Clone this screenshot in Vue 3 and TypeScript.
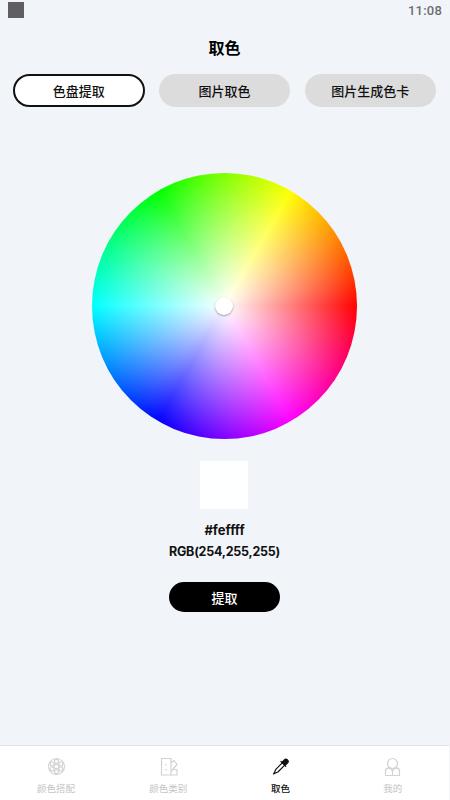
<script setup lang="ts">
const tabs: { label: string; active: boolean }[] = [
  { label: '色盘提取', active: true },
  { label: '图片取色', active: false },
  { label: '图片生成色卡', active: false },
]
</script>

<template>
  <div class="page">
    <div class="status">
      <span class="notice"></span>
      <span class="time">11:08</span>
    </div>
    <h1 class="title">取色</h1>
    <div class="tabs">
      <div v-for="t in tabs" :key="t.label" class="tab" :class="{ active: t.active }">{{ t.label }}</div>
    </div>
    <main class="main">
      <div class="wheel">
        <div class="knob"></div>
      </div>
      <div class="swatch"></div>
      <div class="hex">#feffff</div>
      <div class="rgb">RGB(254,255,255)</div>
      <div class="pick">提取</div>
    </main>
    <nav class="nav">
      <div class="item">
        <svg viewBox="0 0 19 19" class="ico" fill="none" stroke="#d2d2d2" stroke-width="1.1">
          <circle cx="9.5" cy="9.5" r="8" />
          <circle cx="9.5" cy="9.5" r="2.4" />
          <circle cx="9.5" cy="4.4" r="2" />
          <circle cx="9.5" cy="14.6" r="2" />
          <circle cx="5.1" cy="6.95" r="2" />
          <circle cx="13.9" cy="6.95" r="2" />
          <circle cx="5.1" cy="12.05" r="2" />
          <circle cx="13.9" cy="12.05" r="2" />
        </svg>
        <span>颜色搭配</span>
      </div>
      <div class="item">
        <svg viewBox="0 0 19 19" class="ico" fill="none" stroke="#d2d2d2" stroke-width="1.2" stroke-linejoin="round">
          <path d="M2.5 1.5h9.5v16.5H2.5z" />
          <path d="M12 6l3-2.5 3 4-6 7" />
          <path d="M12 18h6v-5.5h-4" />
          <path d="M7 7v1.5M7 12v1.5" />
        </svg>
        <span>颜色类别</span>
      </div>
      <div class="item on">
        <svg viewBox="0 0 19 19" class="ico" fill="none" stroke="#111" stroke-width="1.2" stroke-linejoin="round" stroke-linecap="round">
          <path d="M11 5.5l2.3-2.6a2.2 2.2 0 0 1 3.2 3.1L14 8.4z" fill="#111" />
          <path d="M10 4.5l4.8 4.8" />
          <path d="M11.2 5.8L4.6 12.6 3.6 15.2 2.5 17l1.9-1 2.5-1 6.6-6.7" />
        </svg>
        <span>取色</span>
      </div>
      <div class="item">
        <svg viewBox="0 0 19 19" class="ico" fill="none" stroke="#d2d2d2" stroke-width="1.2" stroke-linejoin="round">
          <circle cx="9.5" cy="6.5" r="5" />
          <path d="M2.5 13.5q0-1.6 3-2.6 3 .6 4 3.1 1-2.5 4-3.1 3 1 3 2.6v5h-14z" />
          <path d="M9.5 14v4.5" />
        </svg>
        <span>我的</span>
      </div>
    </nav>
  </div>
</template>

<style>
html, body { margin: 0; padding: 0; background: #f1f5fa; }
</style>

<style scoped>
.page {
  width: 449px;
  height: 800px;
  overflow: hidden;
  background: #f1f5fa;
  display: flex;
  flex-direction: column;
  font-family: "Noto Sans CJK SC", "Noto Sans", sans-serif;
  color: #000;
}
.status {
  height: 24px;
  display: flex;
  align-items: center;
  justify-content: space-between;
  padding: 0 7px 0 8px;
  flex: none;
}
.notice {
  width: 16px;
  height: 16px;
  margin-top: -5px;
  background: #5f5f63;
}
.time {
  font: 500 13px Roboto, sans-serif;
  color: #6b6d70;
  letter-spacing: 0.2px;
  margin-top: -4px;
}
.title {
  margin: 13px 0 0;
  height: 20px;
  line-height: 20px;
  text-align: center;
  font-size: 16px;
  font-weight: 700;
}
.tabs {
  margin-top: 17px;
  padding: 0 13px;
  display: flex;
  justify-content: space-between;
}
.tab {
  box-sizing: border-box;
  width: 131.5px;
  height: 33px;
  border-radius: 17px;
  background: #dcdcdc;
  display: flex;
  align-items: center;
  justify-content: center;
  font-size: 13px;
  font-weight: 500;
  color: #111;
}
.tab.active {
  background: #fff;
  border: 2px solid #111;
}
.main {
  flex: 1;
  display: flex;
  flex-direction: column;
  align-items: center;
}
.wheel {
  margin-top: 66px;
  width: 265px;
  height: 266px;
  border-radius: 50%;
  position: relative;
  background:
    radial-gradient(closest-side, #fff 0%, rgba(255, 255, 255, 0) 100%),
    conic-gradient(from 90deg, #f00, #f0f, #00f, #0ff, #0f0, #ff0, #f00);
}
.knob {
  position: absolute;
  left: 50%;
  top: 50%;
  width: 18px;
  height: 18px;
  margin: -9px 0 0 -10px;
  border-radius: 50%;
  background: #fff;
  box-shadow: 0 1px 2px rgba(0, 0, 0, 0.35);
}
.swatch {
  margin-top: 22px;
  margin-right: 1px;
  width: 48px;
  height: 48px;
  background: #feffff;
}
.hex, .rgb {
  font-family: Inter, "Noto Sans", sans-serif;
  font-weight: 700;
  font-size: 12.5px;
  letter-spacing: -0.25px;
  line-height: 18px;
  color: #111;
}
.hex { margin-top: 12px; font-size: 13px; letter-spacing: 0; }
.rgb { margin-top: 4px; }
.pick {
  margin-top: 21px;
  width: 111px;
  height: 30px;
  border-radius: 15px;
  background: #000;
  color: #fff;
  font-size: 13px;
  font-weight: 500;
  display: flex;
  align-items: center;
  justify-content: center;
}
.nav {
  flex: none;
  height: 54px;
  background: #fff;
  border-top: 1px solid #dfe3e8;
  display: flex;
}
.item {
  flex: 1;
  display: flex;
  flex-direction: column;
  align-items: center;
  padding-top: 11px;
  font-size: 9.5px;
  line-height: 14px;
  color: #c4c4c4;
}
.item.on { color: #111; font-weight: 500; }
.ico {
  width: 19px;
  height: 19px;
  margin-bottom: 5px;
}
</style>
